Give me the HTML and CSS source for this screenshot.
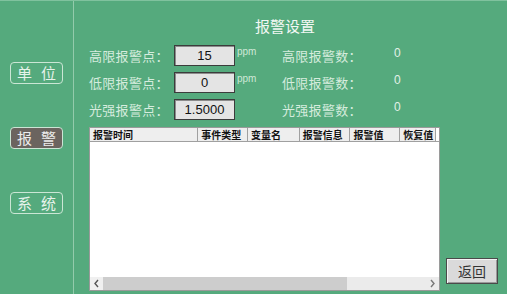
FILE: index.html
```html
<!DOCTYPE html>
<html lang="zh">
<head>
<meta charset="utf-8">
<link rel="stylesheet" href="styles.css">
</head>
<body>
<div class="screen">
  <aside class="side">
    <div class="nav"><span>单</span><span>位</span></div>
    <div class="nav active"><span>报</span><span>警</span></div>
    <div class="nav"><span>系</span><span>统</span></div>
  </aside>
  <main class="main">
    <h1 class="title">报警设置</h1>
    <div class="form">
      <div class="row">
        <span class="label">高限报警点：</span>
        <span class="input">15</span>
        <span class="unit">ppm</span>
        <span class="label">高限报警数：</span>
        <span class="value">0</span>
      </div>
      <div class="row">
        <span class="label">低限报警点：</span>
        <span class="input">0</span>
        <span class="unit">ppm</span>
        <span class="label">低限报警数：</span>
        <span class="value">0</span>
      </div>
      <div class="row">
        <span class="label">光强报警点：</span>
        <span class="input">1.5000</span>
        <span class="unit"></span>
        <span class="label">光强报警数：</span>
        <span class="value">0</span>
      </div>
    </div>
    <div class="bottom">
      <div class="table">
        <div class="thead">
          <span class="th c1">报警时间</span>
          <span class="th c2">事件类型</span>
          <span class="th c3">变量名</span>
          <span class="th c4">报警信息</span>
          <span class="th c5">报警值</span>
          <span class="th c6">恢复值</span>
          <span class="th c7"></span>
        </div>
        <div class="tbody"></div>
        <div class="hscroll">
          <span class="arrow left"><svg width="7" height="9" viewBox="0 0 7 9"><path d="M5 1 L2 4.5 L5 8" fill="none" stroke="#555" stroke-width="1.4"/></svg></span>
          <span class="thumb"></span>
          <span class="track"></span>
          <span class="arrow right"><svg width="7" height="9" viewBox="0 0 7 9"><path d="M2 1 L5 4.5 L2 8" fill="none" stroke="#777" stroke-width="1.4"/></svg></span>
        </div>
      </div>
      <button class="back">返回</button>
    </div>
  </main>
</div>
</body>
</html>
```

FILE: styles.css
```css
* { box-sizing: border-box; }
html, body { margin: 0; padding: 0; }
body {
  width: 507px;
  height: 294px;
  overflow: hidden;
  font-family: "Noto Sans CJK SC", "Liberation Sans", sans-serif;
}
.screen {
  width: 507px;
  height: 294px;
  display: flex;
  background: #55aa7d;
  border-top: 1px solid #80c29e;
}
.side {
  width: 74px;
  border-right: 1px solid #93cbab;
  display: flex;
  flex-direction: column;
  gap: 43px;
  padding: 61px 0 0 10px;
}
.nav {
  width: 53px;
  height: 22px;
  border: 1px solid #cbe6d5;
  border-radius: 4px;
  color: #e6f3eb;
  font-size: 15px;
  line-height: 20px;
  display: flex;
  justify-content: center;
  gap: 9px;
}
.nav.active {
  background: #6b645f;
  color: #ececec;
}
.main {
  flex: 1;
  display: flex;
  flex-direction: column;
  padding-left: 15px;
}
.title {
  margin: 16px 0 0 166px;
  font-size: 15px;
  line-height: 18px;
  font-weight: 400;
  color: #f2f8f4;
}
.form {
  margin-top: 10px;
  display: flex;
  flex-direction: column;
  gap: 6px;
}
.row {
  display: grid;
  grid-template-columns: 85px 61px 47px 112px auto;
  height: 21px;
  align-items: center;
}
.label {
  font-size: 13px;
  line-height: 16px;
  letter-spacing: 0.3px;
  color: #d6ecde;
}
.input {
  height: 21px;
  background: #e4e4e4;
  border: 1px solid #3c3c3c;
  box-shadow: inset 1px 1px 0 #8c8c8c;
  font-family: "Liberation Sans", sans-serif;
  font-size: 13px;
  line-height: 19px;
  text-align: center;
  color: #111;
}
.unit {
  align-self: start;
  margin: 1px 0 0 2px;
  font-family: "Liberation Sans", sans-serif;
  font-size: 10px;
  line-height: 12px;
  color: #cfe8d8;
}
.value {
  align-self: start;
  margin-top: 1px;
  font-family: "Liberation Sans", sans-serif;
  font-size: 12px;
  line-height: 14px;
  color: #e2f1e8;
}
.bottom {
  margin-top: 7px;
  display: flex;
  align-items: flex-end;
}
.table {
  width: 351px;
  height: 164px;
  border: 1px solid #9a9a9a;
  display: flex;
  flex-direction: column;
  background: #fff;
}
.thead {
  display: flex;
  height: 13px;
  background: #eeeeee;
  border-bottom: 1px solid #a0a0a0;
  box-sizing: content-box;
}
.th {
  height: 13px;
  border-right: 1px solid #a0a0a0;
  font-size: 10px;
  line-height: 13px;
  font-weight: 700;
  color: #111;
  padding-left: 3px;
  white-space: nowrap;
  overflow: hidden;
}
.c1 { width: 109px; }
.c2 { width: 50px; }
.c3 { width: 52px; }
.c4 { width: 51px; }
.c5 { width: 50px; }
.c6 { width: 36px; }
.c7 { flex: 1; border-right: none; background: #fff; }
.tbody {
  flex: 1;
  background: #fff;
}
.hscroll {
  display: flex;
  height: 13px;
  background: #ebebeb;
}
.arrow {
  width: 13px;
  height: 13px;
  display: flex;
  align-items: center;
  justify-content: center;
  background: #f0f0f0;
}
.thumb {
  width: 244px;
  background: #cdcdcd;
}
.track {
  flex: 1;
}
.arrow.right { background: #ebebeb; }
.back {
  margin: 0 0 7px 6px;
  width: 52px;
  height: 26px;
  padding: 0;
  background: #dadada;
  border: 1px solid #4a4a4a;
  box-shadow: inset 1px 1px 0 #f4f4f4, inset -1px -1px 0 #9a9a9a;
  font-family: "Noto Sans CJK SC", sans-serif;
  font-size: 14px;
  line-height: 24px;
  color: #333;
}
```
